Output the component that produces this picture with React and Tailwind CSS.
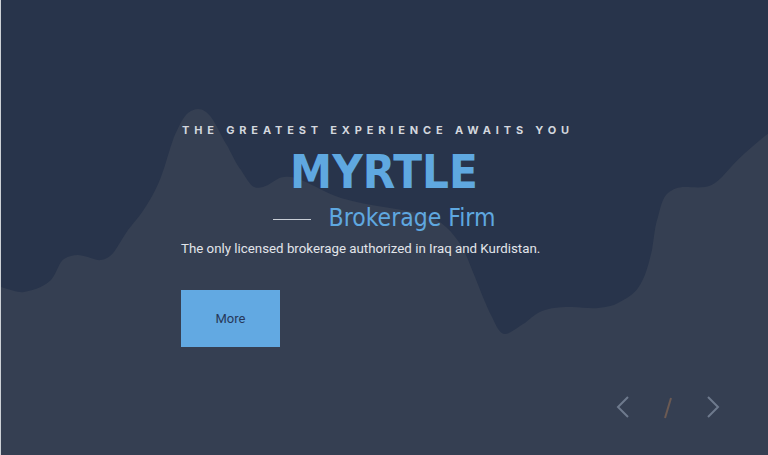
import React from "react";

export default function App() {
  return (
    <div className="relative w-[768px] h-[455px] overflow-hidden bg-[#28344b] border-l border-[#cdd1d6]">
      <svg
        className="absolute inset-0"
        width="768"
        height="455"
        viewBox="0 0 768 455"
        preserveAspectRatio="none"
      >
        <path
          fill="#353f52"
          d="M0,287 C10,290 18,293 23,292 C35,290 45,285 50,280 C56,273 58,262 63,259 C68,256 72,255 77,255 C88,256 95,261 100,260 C106,259 110,256 113,252 C118,245 122,237 127,230 C135,220 142,212 147,203 C152,195 156,187 160,177 C165,164 168,150 173,137 C178,126 182,117 187,113 C191,110 194,109 197,109 C202,109 206,112 210,117 C217,127 221,138 227,147 C232,157 236,165 240,170 C245,178 249,185 253,187 C258,189 262,187 267,185 C272,182 278,177 283,177 C290,176 295,178 300,180 C315,186 325,193 340,198 C370,207 400,208 425,215 C440,220 452,232 461,247 C467,258 470,268 474,277 C480,292 486,308 491,317 C495,325 498,333 503,334 C510,334 516,327 524,323 C530,318 536,312 544,310 C553,307 562,307 571,307 C580,307 590,309 597,308 C605,307 612,306 617,303 C626,298 632,295 637,288 C645,277 648,262 651,250 C653,238 654,225 657,217 C660,205 662,197 667,193 C672,189 677,187 684,187 C690,187 697,188 704,187 C711,186 716,182 721,177 C729,168 736,160 744,153 C752,146 760,139 768,133 L768,455 L0,455 Z"
        />
      </svg>

      <div className="relative flex flex-col w-[406px] ml-[180px] pt-[123px]">
        <div
          className="whitespace-nowrap pl-px text-[11px] font-bold tracking-[0.44em] text-[#d3d7de] leading-[14px]"
          style={{ fontFamily: "Inter, 'Liberation Sans', sans-serif" }}
        >
          THE GREATEST EXPERIENCE AWAITS YOU
        </div>
        <div
          className="text-center text-[47px] font-bold text-[#5fa8e0] leading-[48px] mt-[11px] font-stretch-condensed"
          style={{ fontFamily: "'DejaVu Sans Condensed', 'DejaVu Sans', sans-serif" }}
        >
          MYRTLE
        </div>
        <div className="flex items-center justify-center gap-[18px] mt-[7px]">
          <div className="w-[38px] h-px bg-[#c9ced6] mt-[2px]" />
          <div
            className="text-[24.5px] text-[#5fa8e0] leading-[30px] font-stretch-condensed"
            style={{ fontFamily: "'DejaVu Sans Condensed', 'DejaVu Sans', sans-serif" }}
          >
            Brokerage Firm
          </div>
        </div>
        <div
          className="text-[13.3px] text-[#e2e5ea] leading-[18px] mt-[7px]"
          style={{ fontFamily: "Roboto, 'Liberation Sans', sans-serif" }}
        >
          The only licensed brokerage authorized in Iraq and Kurdistan.
        </div>
        <button
          className="mt-[32px] w-[99px] h-[57px] bg-[#62a9e2] text-[#27385a] text-[13px]"
          style={{ fontFamily: "Roboto, 'Liberation Sans', sans-serif" }}
        >
          More
        </button>
      </div>

      <div className="absolute left-[612px] top-[394px] flex items-center gap-[28px]">
        <svg width="18" height="26" viewBox="0 0 18 26">
          <path d="M15,3 L5,13 L15,23" fill="none" stroke="#6e7a8d" strokeWidth="2" />
        </svg>
        <svg width="18" height="26" viewBox="0 0 18 26">
          <path d="M12,4 L6,24" fill="none" stroke="#6b5a53" strokeWidth="2" />
        </svg>
        <svg width="18" height="26" viewBox="0 0 18 26">
          <path d="M3,3 L13,13 L3,23" fill="none" stroke="#6e7a8d" strokeWidth="2" />
        </svg>
      </div>
    </div>
  );
}
